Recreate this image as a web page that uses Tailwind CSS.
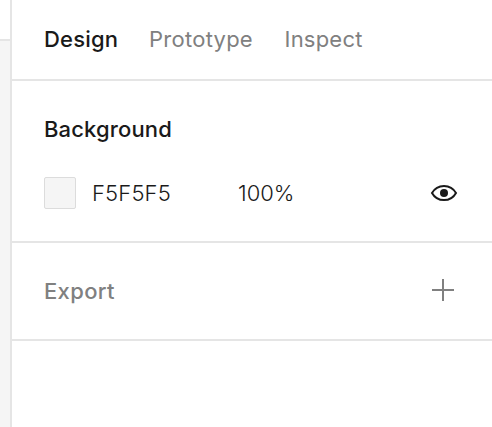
<!DOCTYPE html>
<html lang="en"><head><meta charset="utf-8"><title>Design panel</title>
<script src="https://cdn.jsdelivr.net/npm/@tailwindcss/browser@4"></script></head>
<body class="flex h-[427px] w-[492px] overflow-hidden bg-white font-['Inter',sans-serif] text-[22px] leading-8 text-[#1a1a1a]">
<div class="flex w-3 shrink-0 flex-col border-r-2 border-[#e5e5e5]"><div class="h-[41px] shrink-0 border-b-2 border-[#e5e5e5] bg-white"></div><div class="grow bg-[#f5f5f5]"></div></div>
<main class="flex grow flex-col">
<nav class="flex h-[81px] items-start border-b-2 border-[#e5e5e5] pt-[23px] pl-8 text-[#808080]">
<span class="w-[105px] font-[550] tracking-[0.18px] text-[#1a1a1a]">Design</span><span class="w-[135.500px] tracking-[0.26px]">Prototype</span><span class="tracking-[0.22px]">Inspect</span></nav>
<section class="h-[162px] border-b-2 border-[#e5e5e5] pt-8 pl-8">
<h2 class="font-[550] tracking-[0.14px]">Background</h2>
<div class="mt-8 flex h-8 items-center font-light"><span class="mr-4 size-8 rounded-[2px] border border-[#dcdcdc] bg-[#f5f5f5]"></span><span class="w-[146px] tracking-[0.15px]">F5F5F5</span><span>100%</span>
<svg class="mr-[34px] ml-auto" width="28" height="20" viewBox="0 0 28 20" fill="none"><path d="M2 10C4.500 5.500 9 2.900 14 2.900S23.500 5.500 26 10C23.500 14.500 19 17.100 14 17.100S4.500 14.500 2 10Z" stroke="#1a1a1a" stroke-width="2"/><circle cx="14" cy="10" r="4" fill="#1a1a1a"/></svg></div></section>
<section class="flex h-[98px] items-center justify-between border-b-2 border-[#e5e5e5] pr-[38px] pl-8 text-[#808080]"><h2 class="font-[550] tracking-[0.34px]">Export</h2>
<svg class="mb-0.5" width="22" height="22" viewBox="0 0 22 22" fill="none"><path d="M11 0V22M0 11H22" stroke="#808080" stroke-width="2"/></svg></section>
</main></body></html>
